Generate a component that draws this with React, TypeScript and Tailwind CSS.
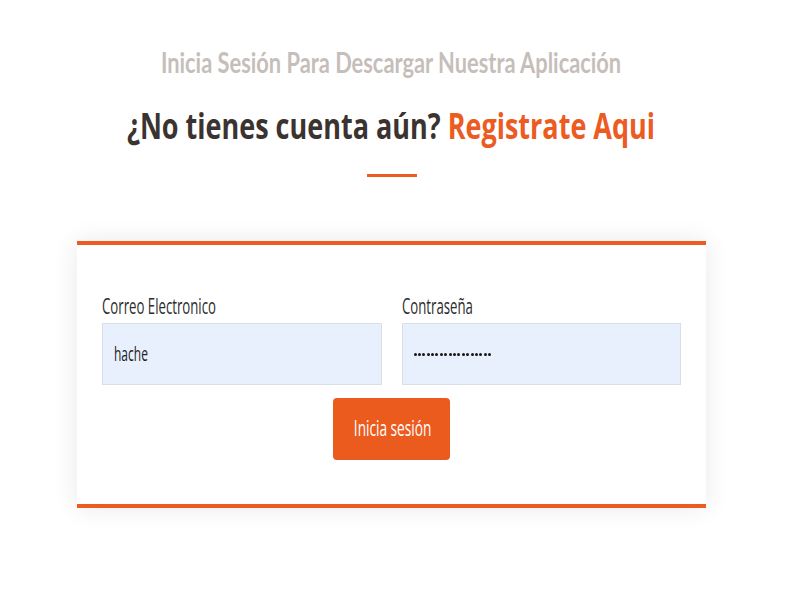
import type { JSX, ReactNode } from "react";

const Squish = ({ children, className }: { children: ReactNode; className: string }): JSX.Element => (
  <span className={`inline-block whitespace-nowrap ${className}`}>{children}</span>
);

const Field = ({ label, children }: { label: string; children: ReactNode }): JSX.Element => (
  <div className="flex flex-col">
    <label className="h-[26px] text-[22px] leading-[26px] text-[#2b2b2b]">
      <Squish className="origin-left scale-x-[0.6]">{label}</Squish>
    </label>
    <div className="mt-[5px] flex h-[62px] items-center border border-[#d9dfe7] bg-[#e8f0fe] px-[11px] text-[20px] text-[#222]">
      {children}
    </div>
  </div>
);

const App = (): JSX.Element => {
  const dots = Array.from({ length: 18 });

  return (
    <div className="min-h-[600px] w-[783px] bg-white font-['Open_Sans',sans-serif]">
      <div className="flex flex-col items-center pt-[42px]">
        <h2 className="h-[40px] font-['Lato',sans-serif] text-[28px] font-bold leading-[40px] text-[#c6beba]">
          <Squish className="scale-x-[0.78]">Inicia Sesión Para Descargar Nuestra Aplicación</Squish>
        </h2>
        <h1 className="mt-[22px] h-[44px] text-[36px] font-bold leading-[44px] text-[#3b3330]">
          <Squish className="scale-x-[0.75]">
            ¿No tienes cuenta aún? <span className="text-[#ec5b1f]">Registrate Aqui</span>
          </Squish>
        </h1>
        <div className="mt-[26px] h-[3px] w-[50px] bg-[#ec5b1f]" />

        <div className="mt-[64px] w-[629px] border-y-4 border-[#ec5b1f] bg-white px-[25px] pt-[47px] pb-[44px] shadow-[0_0_24px_rgba(0,0,0,0.09)]">
          <div className="grid grid-cols-2 gap-5">
            <Field label="Correo Electronico">
              <Squish className="origin-left scale-x-[0.6]">hache</Squish>
            </Field>
            <Field label="Contraseña">
              <div className="flex gap-[1.4px]">
                {dots.map((_, i) => (
                  <span key={i} className="h-[3px] w-[3px] rounded-full bg-[#151515]" />
                ))}
              </div>
            </Field>
          </div>
          <div className="mt-[13px] flex justify-center">
            <button
              type="button"
              className="h-[62px] w-[117px] rounded-[4px] bg-[#eb5b1e] text-[21px] text-white"
            >
              <Squish className="scale-x-[0.65]">Inicia sesión</Squish>
            </button>
          </div>
        </div>
      </div>
    </div>
  );
};

export default App;
